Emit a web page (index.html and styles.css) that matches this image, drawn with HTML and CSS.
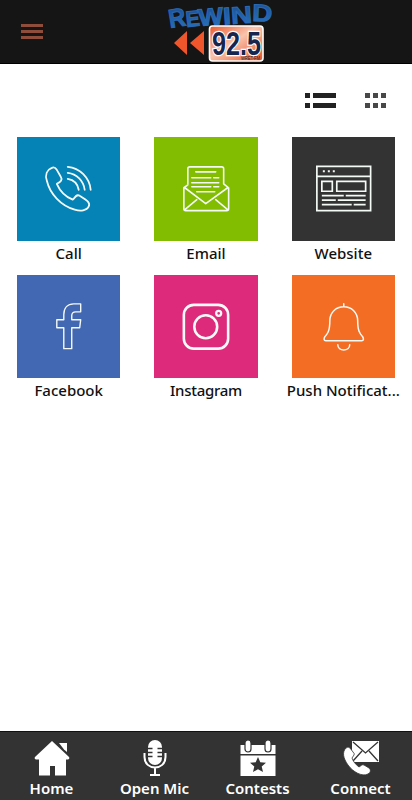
FILE: index.html
```html
<!DOCTYPE html>
<html>
<head>
    <meta charset="utf-8">
    <title>Rewind 92.5</title>
    <link rel="stylesheet" href="styles.css">
</head>
<body>
    <header class="header">
        <button class="menu-button" aria-label="Menu"><span></span><span></span><span></span></button>
        <svg class="logo" width="112" height="62" viewBox="0 0 112 62">
            <defs>
                <linearGradient id="blue" x1="0" y1="0" x2="0" y2="1">
                    <stop offset="0" stop-color="#1c4b90"/>
                    <stop offset="1" stop-color="#2874c0"/>
                </linearGradient>
                <linearGradient id="orange" x1="0" y1="0" x2="1" y2="1">
                    <stop offset="0" stop-color="#e9582c"/>
                    <stop offset="0.45" stop-color="#f9c4ad"/>
                    <stop offset="1" stop-color="#e84f22"/>
                </linearGradient>
            </defs>
            <g class="logo-name">
                <text transform="translate(5 28) rotate(-9)" font-size="26" textLength="17" lengthAdjust="spacingAndGlyphs">R</text>
                <text transform="translate(21.500 27) rotate(-6)" font-size="22" textLength="14" lengthAdjust="spacingAndGlyphs">E</text>
                <text transform="translate(34 26) rotate(-5)" font-size="24" textLength="25" lengthAdjust="spacingAndGlyphs">W</text>
                <text transform="translate(58.500 24.500) rotate(-4)" font-size="24" textLength="8" lengthAdjust="spacingAndGlyphs">I</text>
                <text transform="translate(66.500 24) rotate(-4)" font-size="24" textLength="21" lengthAdjust="spacingAndGlyphs">N</text>
                <text transform="translate(87 21) rotate(2)" font-size="24" textLength="20" lengthAdjust="spacingAndGlyphs">D</text>
            </g>
            <path d="M22 31v24L9 43zM39 31v24L25 43z" fill="#f0562c"/>
            <rect x="44.500" y="26" width="53.500" height="35" rx="3" fill="url(#orange)" stroke="#fff" stroke-width="1.600"/>
            <text class="logo-number" x="47" y="54.500" textLength="49" lengthAdjust="spacingAndGlyphs">92.5</text>
            <text class="logo-call" x="76" y="60" textLength="19" lengthAdjust="spacingAndGlyphs">WRET-FM</text>
        </svg>
    </header>

    <main class="content">
        <div class="view-switch">
            <svg width="31" height="15" viewBox="0 0 31 15"><path d="M0 0h5v5H0zM8 0h23v5H8zM0 10h5v5H0zM8 10h23v5H8z" fill="#222"/></svg>
            <svg width="21" height="15" viewBox="0 0 21 15"><path d="M0 0h5v5H0zM8 0h5v5H8zM16 0h5v5h-5zM0 10h5v5H0zM8 10h5v5H8zM16 10h5v5h-5z" fill="#484848"/></svg>
        </div>

        <div class="tiles">
            <a class="tile">
                <div class="tile-box call">
                    <svg viewBox="0 0 104 104" stroke-width="1.800">
                        <path d="M35 31C30 33 28 38 30 44C33 57 44 69 58 73C64 75 70 74 72 70C74 66 71 64 63 59C60 57 59 60 56 63C49 60 43 54 40 47C44 45 46 43 44 40L40 33C38 30 37 30 35 31Z"/>
                        <path d="M51 30C63 31 73 41 74 53M51 36C60 37 67 44 68 53M51 42C57 43 61 47 62 53"/>
                    </svg>
                </div>
                <span class="label">Call</span>
            </a>
            <a class="tile">
                <div class="tile-box email">
                    <svg viewBox="0 0 104 104" stroke-width="1.600">
                        <path d="M34 47V32Q34 30 36 30H68Q70 30 70 32V47M34 48L30 51V72Q30 74 32 74H73Q75 74 75 72V51L70 47M31 51L52 67L74 51M31 73L43 63M74 73L62 63"/>
                        <path d="M42 35H62M38 41H57M60 41H65M38 46H65M38 50H57M60 50H65M43 55H61"/>
                    </svg>
                </div>
                <span class="label">Email</span>
            </a>
            <a class="tile">
                <div class="tile-box website">
                    <svg viewBox="0 0 104 104" stroke-width="1.700">
                        <path d="M25 29.500H79V74H25zM25 39.500H79M30 44.500H40.500V54.500H30zM45 44.500H74V54.500H45z"/>
                        <path d="M30 59H52M54 59H74M30 63.500H44M46 63.500H74M30 68H60M62 68H74"/>
                        <path d="M31 34.500h2M36 34.500h2M41 34.500h2" stroke-width="2"/>
                    </svg>
                </div>
                <span class="label">Website</span>
            </a>
            <a class="tile">
                <div class="tile-box facebook">
                    <svg viewBox="0 0 104 104" stroke-width="1.400">
                        <path d="M47 74V53H40V45H47V40C47 33 51 29 57 29H64V37H59C56 37 55 38 55 41V45H64L63 53H55V74Z"/>
                    </svg>
                </div>
                <span class="label">Facebook</span>
            </a>
            <a class="tile">
                <div class="tile-box instagram">
                    <svg viewBox="0 0 104 104" stroke-width="2.600">
                        <rect x="30" y="30" width="44.500" height="44" rx="10"/>
                        <circle cx="52" cy="52" r="11.500"/>
                        <circle cx="65" cy="38.500" r="2.500" stroke-width="2.300"/>
                    </svg>
                </div>
                <span class="label label-tight">Instagram</span>
            </a>
            <a class="tile">
                <div class="tile-box push">
                    <svg viewBox="0 0 104 104" stroke-width="1.500">
                        <path d="M52 29V32M38 46C38 38 44 32 52 32S66 38 66 46C66 56 68 59 71 62Q73 66 70 66H34Q31 66 33 62C36 59 38 56 38 46ZM46 70C46 77 58 77 58 70"/>
                    </svg>
                </div>
                <span class="label">Push Notificat...</span>
            </a>
        </div>
    </main>

    <nav class="tabs">
        <a class="tab">
            <svg width="36" height="36" viewBox="0 0 36 36">
                <path d="M18 1L35 17Q36 19 34 19.500H32V35.500H21V26H16V35.500H5V19.500H2Q0 19 1 17Z"/>
                <path d="M25 3H33V12L30 9.500Z"/>
            </svg>
            <span>Home</span>
        </a>
        <a class="tab">
            <svg width="36" height="36" viewBox="0 0 36 36">
                <rect x="11" y="0" width="14" height="25" rx="7"/>
                <path d="M11 8.500h4.500M20.500 8.500H25M11 12.500h4.500M20.500 12.500H25M11 16.500h4.500M20.500 16.500H25" stroke="#333" stroke-width="1.300"/>
                <path d="M7.500 13V17C7.500 31 28.500 31 28.500 17V13M18 27V34M13 35H23" fill="none" stroke="#fff" stroke-width="2"/>
            </svg>
            <span>Open Mic</span>
        </a>
        <a class="tab">
            <svg width="36" height="36" viewBox="0 0 36 36">
                <path d="M.5 5H35.500V14H.500zM.500 15.500H35.500V36H.500z"/>
                <rect x="5" y="0" width="6" height="12" rx="3" stroke="#333" stroke-width="1.200"/>
                <rect x="25" y="0" width="6" height="12" rx="3" stroke="#333" stroke-width="1.200"/>
                <path d="M18 17L20.300 22.300L26 22.800L21.700 26.600L23 32L18 29.200L13 32L14.300 26.600L10 22.800L15.700 22.300Z" fill="#333"/>
            </svg>
            <span>Contests</span>
        </a>
        <a class="tab">
            <svg width="36" height="36" viewBox="0 0 36 36">
                <path d="M9 1H36V22H9z"/>
                <path d="M10 2L22.500 13L35 2M10 21L19 11M35 21L26 11" fill="none" stroke="#333" stroke-width="1.300"/>
                <path d="M3 8C-1 12 0 18 5 25C10 32 19 37 25 34C28 32 28 30 26 28L21 25C19 24 18 26 16 27C12 24 10 21 9 18L11 15Q12 14 10 12L7 8Q5 6 3 8Z" stroke="#333" stroke-width=".8"/>
            </svg>
            <span>Connect</span>
        </a>
    </nav>
</body>
</html>
```
FILE: styles.css
```css
* {
    box-sizing: border-box;
}

body {
    margin: 0;
    height: 800px;
    display: flex;
    flex-direction: column;
    background-color: #fff;
    color: #111;
    font-family: "Noto Sans", sans-serif;
    overflow: hidden;
}

.header {
    height: 64px;
    flex: none;
    display: flex;
    align-items: flex-start;
    background-color: #151515;
    border-bottom: 1px solid #000;
}

.menu-button {
    display: flex;
    flex-direction: column;
    gap: 3px;
    width: 22px;
    margin: 24px 122px 0 21px;
    padding: 0;
    border: none;
    background: none;
}

.menu-button span {
    height: 3px;
    background-color: #8f4c3b;
}

.logo {
    display: block;
}

.logo-name {
    font-family: "Liberation Sans", sans-serif;
    font-weight: bold;
    fill: url(#blue);
    stroke: #2869b4;
    stroke-width: 1px;
}

.logo-number {
    font-family: "Liberation Sans", sans-serif;
    font-size: 34px;
    font-weight: bold;
    fill: #16264e;
    stroke: #fff;
    stroke-width: 2.5px;
    paint-order: stroke;
}

.logo-call {
    font-family: "Liberation Sans", sans-serif;
    font-size: 5px;
    fill: #222;
}

.content {
    flex: 1;
}

.view-switch {
    display: flex;
    justify-content: flex-end;
    gap: 29px;
    padding: 29px 26px 0 0;
}

.tiles {
    display: grid;
    grid-template-columns: repeat(3, 1fr);
    padding-top: 29.4px;
}

.tile {
    display: flex;
    flex-direction: column;
    align-items: center;
    height: 137.3px;
}

.tile-box {
    width: 103.5px;
    height: 103.5px;
}

.tile-box svg {
    display: block;
    fill: none;
    stroke: #f4faf6;
    stroke-linecap: round;
    stroke-linejoin: round;
}

.call { background-color: #0582b6; }
.email { background-color: #82bd02; }
.website { background-color: #333; }
.facebook { background-color: #4267b3; }
.instagram { background-color: #de2a7b; }
.push { background-color: #f36e24; }

.website svg {
    stroke-linecap: butt;
    stroke-linejoin: miter;
}

.label {
    margin-top: 1px;
    font-size: 15px;
    font-weight: 500;
    line-height: 22px;
    white-space: nowrap;
}

.label-tight {
    letter-spacing: -0.3px;
}

.tabs {
    flex: none;
    display: grid;
    grid-template-columns: repeat(4, 103px);
    height: 69px;
    background-color: #333;
    border-top: 1px solid #111;
    color: #fff;
}

.tab {
    display: flex;
    flex-direction: column;
    align-items: center;
    padding-top: 8px;
    font-size: 15px;
    font-weight: 600;
    line-height: 24px;
    white-space: nowrap;
}

.tab svg {
    display: block;
    fill: #fff;
}
```
